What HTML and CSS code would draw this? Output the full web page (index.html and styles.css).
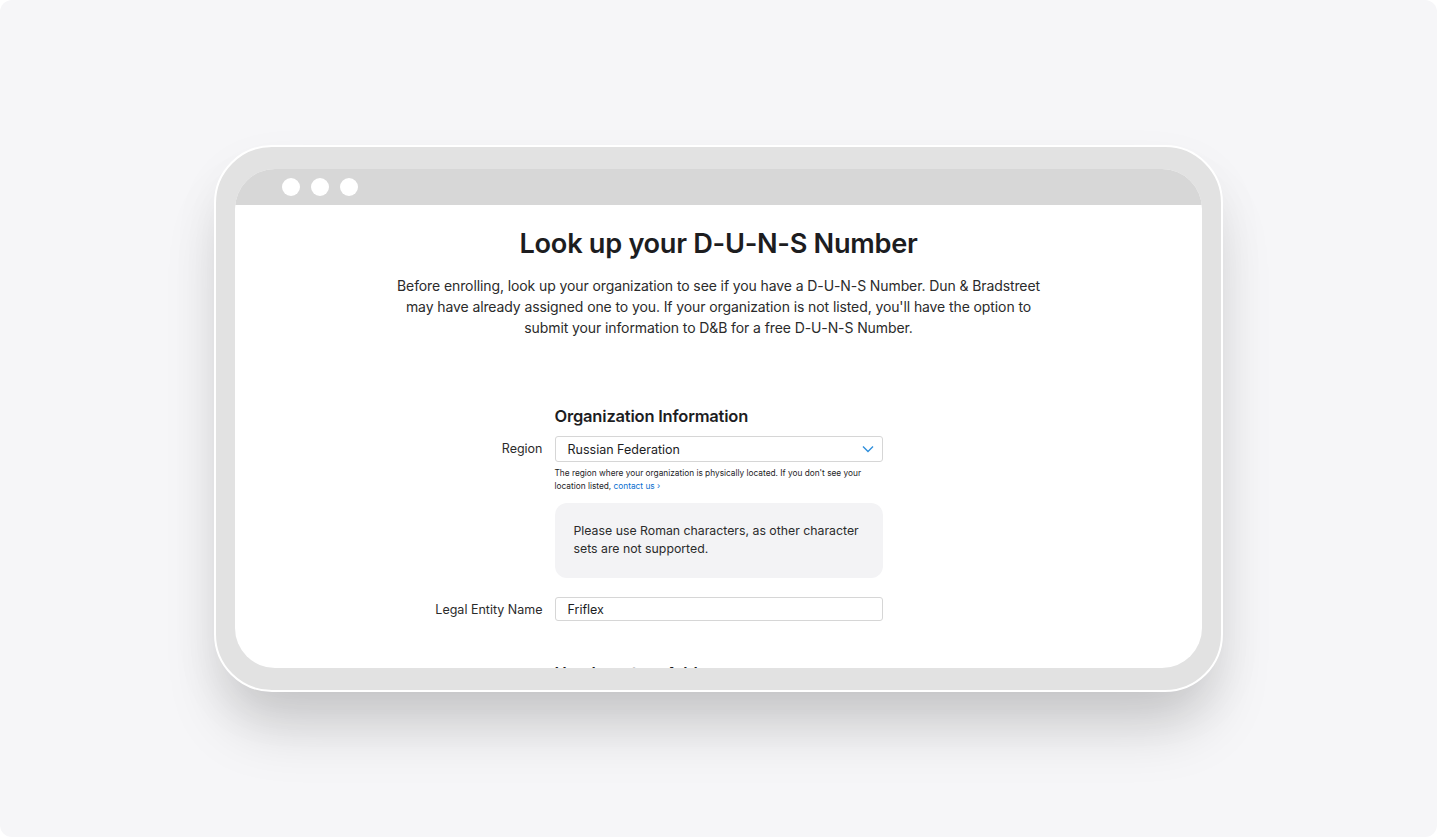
FILE: index.html
```html
<!DOCTYPE html>
<html lang="en">
<head>
    <meta charset="UTF-8">
    <meta name="viewport" content="width=device-width, initial-scale=1.0">
    <title>Look up your D-U-N-S Number</title>
    <link rel="stylesheet" href="styles.css">
</head>
<body>
    <div class="canvas">
        <div class="device">
            <div class="screen">
                <div class="titlebar">
                    <span class="dot"></span>
                    <span class="dot"></span>
                    <span class="dot"></span>
                </div>

                <h1>Look up your D-U-N-S Number</h1>
                <p class="intro">Before enrolling, look up your organization to see if you have a D-U-N-S Number. Dun &amp; Bradstreet<br>
                    may have already assigned one to you. If your organization is not listed, you'll have the option to<br>
                    submit your information to D&amp;B for a free D-U-N-S Number.</p>

                <form class="lookup">
                    <h2 class="section-title">Organization Information</h2>

                    <label class="field-label" for="region">Region</label>
                    <div class="field">
                        <div class="select" id="region">
                            <span>Russian Federation</span>
                            <svg width="12" height="8" viewBox="0 0 12 8"><path d="M1 1.5l5 5 5-5" fill="none" stroke="#2f8fdc" stroke-width="1.4"/></svg>
                        </div>
                        <p class="help">The region where your organization is physically located. If you don't see your location listed, <a href="#">contact us ›</a></p>
                        <div class="notice">Please use Roman characters, as other character sets are not supported.</div>
                    </div>

                    <label class="field-label" for="legalName">Legal Entity Name</label>
                    <div class="field">
                        <input type="text" id="legalName" value="Friflex">
                    </div>

                    <h2 class="section-title next">Headquarters Address</h2>
                </form>
            </div>
        </div>
    </div>
</body>
</html>
```

FILE: styles.css
```css
body {
    margin: 0;
    background: #ffffff;
    font-family: Inter, "Liberation Sans", sans-serif;
    color: #1d1d1f;
}
.canvas {
    width: 1437px;
    height: 837px;
    background: #f6f6f8;
    border-radius: 12px;
    display: flex;
    justify-content: center;
    padding-top: 145px;
    box-sizing: border-box;
    overflow: hidden;
}
.device {
    width: 1009px;
    height: 547px;
    box-sizing: border-box;
    padding: 22px 19px;
    background: #e2e2e2;
    border: 2px solid #ffffff;
    border-radius: 58px;
    box-shadow: 0 45px 60px -12px rgba(0, 0, 0, 0.17), 0 20px 50px rgba(0, 0, 0, 0.05);
}
.screen {
    height: 499px;
    background: #ffffff;
    border-radius: 40px;
    overflow: hidden;
    text-align: center;
}
.titlebar {
    height: 36px;
    background: #d7d7d7;
    display: flex;
    align-items: center;
    gap: 11px;
    padding-left: 47px;
}
.dot {
    width: 18px;
    height: 18px;
    border-radius: 50%;
    background: #ffffff;
}
h1 {
    margin: 22px 0 0;
    font-size: 27.2px;
    line-height: 34px;
    font-weight: 600;
    letter-spacing: -0.3px;
    color: #1d1d1f;
}
.intro {
    margin: 14px 0 0;
    font-size: 14px;
    line-height: 21px;
    letter-spacing: -0.1px;
    color: #2b2b2b;
}
.lookup {
    display: grid;
    grid-template-columns: 1fr 328px 1fr;
    column-gap: 12px;
    margin-top: 67px;
    text-align: left;
}
.section-title {
    grid-column: 2;
    margin: 0 0 9px;
    font-size: 16.5px;
    line-height: 22px;
    font-weight: 600;
    letter-spacing: -0.2px;
    color: #1d1d1f;
}
.section-title.next {
    margin-top: 22px;
}
.field-label {
    grid-column: 1;
    text-align: right;
    font-size: 12.5px;
    line-height: 26px;
    color: #2b2b2b;
}
.field {
    grid-column: 2;
    margin-bottom: 19px;
}
.select, input {
    box-sizing: border-box;
    width: 328px;
    border: 1px solid #d6d6d6;
    border-radius: 3px;
    font-family: inherit;
    font-size: 12.5px;
    color: #1d1d1f;
}
.select {
    height: 26px;
    display: flex;
    align-items: center;
    justify-content: space-between;
    padding: 0 8px 0 12px;
}
input {
    display: block;
    height: 24px;
    padding: 0 12px;
    outline: none;
}
.help {
    margin: 5px 0 0;
    font-size: 8.3px;
    line-height: 13px;
    color: #1d1d1f;
}
.help a {
    color: #0a6fd0;
    text-decoration: none;
}
.notice {
    margin-top: 10px;
    padding: 19px 8px 20px 19px;
    background: #f3f3f5;
    border-radius: 12px;
    font-size: 12.3px;
    line-height: 18px;
    color: #2b2b2b;
}
```
